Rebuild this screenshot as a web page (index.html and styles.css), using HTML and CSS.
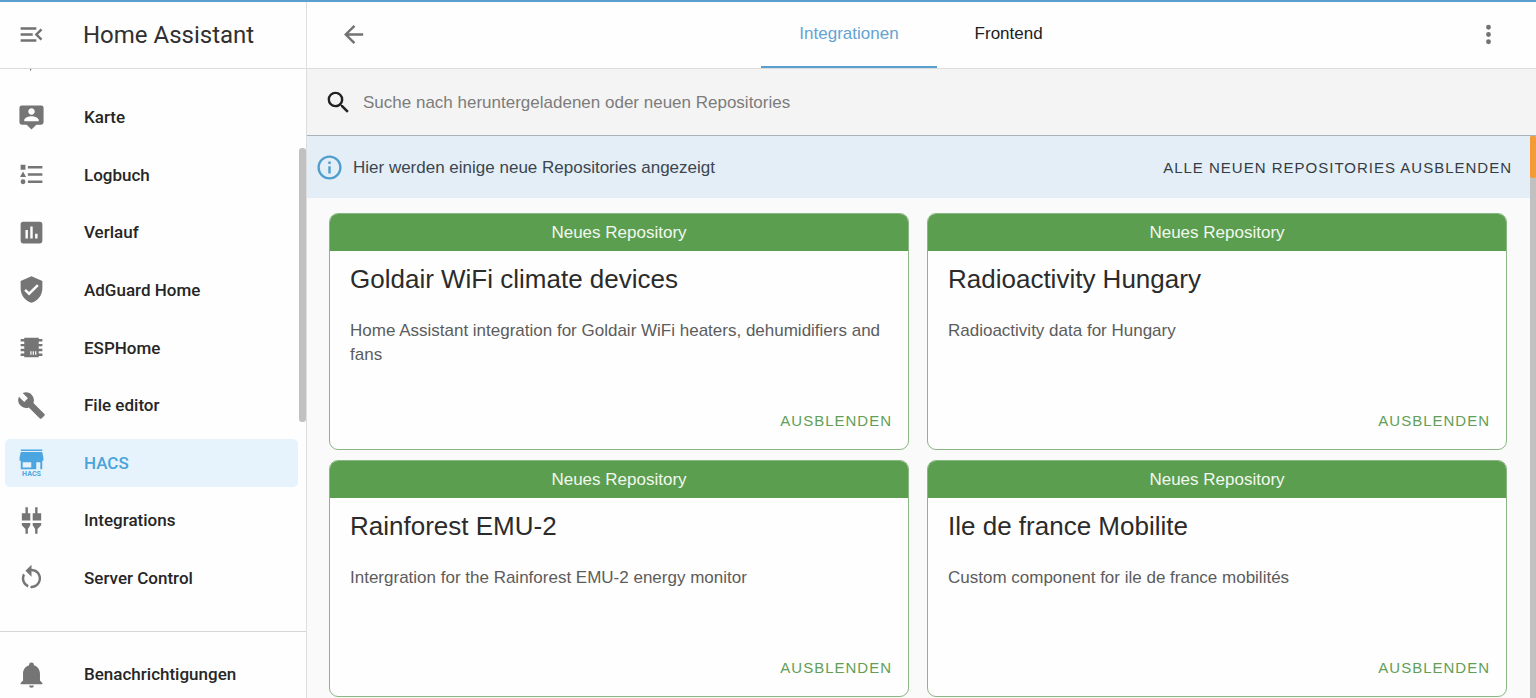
FILE: index.html
```html
<!DOCTYPE html>
<html lang="de">
<head>
<meta charset="utf-8">
<title>Home Assistant</title>
<link rel="stylesheet" href="styles.css">
</head>
<body>
<div class="app">
  <aside class="sidebar">
    <header class="sidebar-header">
      <button class="icon-button" type="button" aria-label="Seitenleiste einklappen">
        <svg class="icon" viewBox="0 0 24 24"><path d="M21,15.61L19.59,17L14.58,12L19.59,7L21,8.39L17.44,12L21,15.61M3,6H16V8H3V6M3,13V11H13V13H3M3,18V16H16V18H3Z"/></svg>
      </button>
      <span class="sidebar-title">Home Assistant</span>
    </header>
    <nav class="nav">
      <svg class="icon nav-clipped" viewBox="0 0 24 24" aria-hidden="true"><path d="M7,2V13H10V22L17,10H13L17,2H7Z"/></svg>
      <a class="nav-item" href="#"><svg class="icon" viewBox="0 0 24 24"><path d="M20,2H4A2,2 0 0,0 2,4V16A2,2 0 0,0 4,18H8L12,22L16,18H20A2,2 0 0,0 22,16V4A2,2 0 0,0 20,2M12,4.3C13.5,4.3 14.7,5.5 14.7,7C14.7,8.5 13.5,9.7 12,9.7C10.5,9.7 9.3,8.5 9.3,7C9.3,5.5 10.5,4.3 12,4.3M18,15H6V14.1C6,12.1 10,11 12,11C14,11 18,12.1 18,14.1V15Z"/></svg><span>Karte</span></a>
      <a class="nav-item" href="#"><svg class="icon" viewBox="0 0 24 24"><path d="M5,9.5L7.5,14H2.5L5,9.5M3,4H7V8H3V4M5,20A2,2 0 0,0 7,18A2,2 0 0,0 5,16A2,2 0 0,0 3,18A2,2 0 0,0 5,20M9,5V7H21V5H9M9,19H21V17H9V19M9,13H21V11H9V13Z"/></svg><span>Logbuch</span></a>
      <a class="nav-item" href="#"><svg class="icon" viewBox="0 0 24 24"><path d="M17,17H15V13H17M13,17H11V7H13M9,17H7V10H9M19,3H5C3.89,3 3,3.89 3,5V19A2,2 0 0,0 5,21H19A2,2 0 0,0 21,19V5C21,3.89 20.1,3 19,3Z"/></svg><span>Verlauf</span></a>
      <a class="nav-item" href="#"><svg class="icon" viewBox="0 0 24 24"><path d="M10,17L6,13L7.41,11.59L10,14.17L16.59,7.58L18,9M12,1L3,5V11C3,16.55 6.84,21.74 12,23C17.16,21.74 21,16.55 21,11V5L12,1Z"/></svg><span>AdGuard Home</span></a>
      <a class="nav-item" href="#"><svg class="icon" viewBox="0 0 24 24"><path fill-rule="evenodd" d="M6,4H18V5H21V7H18V9H21V11H18V13H21V15H18V17H21V19H18V20H6V19H3V17H6V15H3V13H6V11H3V9H6V7H3V5H6V4M11,15V18H12V15H11M13,15V18H14V15H13M15,15V18H16V15H15Z"/></svg><span>ESPHome</span></a>
      <a class="nav-item" href="#"><svg class="icon" viewBox="0 0 24 24"><path d="M22.7,19L13.6,9.9C14.5,7.6 14,4.9 12.1,3C10.1,1 7.1,0.6 4.7,1.7L9,6L6,9L1.6,4.7C0.4,7.1 0.9,10.1 2.9,12.1C4.8,14 7.5,14.5 9.8,13.6L18.9,22.7C19.3,23.1 19.9,23.1 20.3,22.7L22.6,20.4C23.1,20 23.1,19.3 22.7,19Z"/></svg><span>File editor</span></a>
      <a class="nav-item active" href="#" aria-current="page"><svg class="icon hacs-icon" viewBox="0 0 24 26"><path fill-rule="evenodd" d="M3,2H21V3.4H3V2M3,4.2H21L22,9V11.5H2V9L3,4.2M3,11.5H21V18.6H19.4V12.8H16V18.6H3V11.5M4.6,12.8V17.2H11.8V12.8H4.6Z"/><text class="hacs-word" x="12" y="24" text-anchor="middle">HACS</text></svg><span>HACS</span></a>
      <a class="nav-item" href="#"><svg class="icon" viewBox="0 0 24 24"><path d="M7,1H9V6H11V12H4V6H7V1M15,1H17V6H20V12H13V6H15V1M4,14H11V16L9,19V23H7V19L4,16V14M13,14H20V16L17,19V23H15V19L13,16V14Z"/></svg><span>Integrations</span></a>
      <a class="nav-item" href="#"><svg class="icon" viewBox="0 0 24 24"><path d="M12,4C14.1,4 16.1,4.8 17.6,6.3C20.7,9.4 20.7,14.5 17.6,17.6C15.8,19.5 13.3,20.2 10.9,19.9L11.4,17.9C13.1,18.1 14.9,17.5 16.2,16.2C18.5,13.9 18.5,10.1 16.2,7.7C15.1,6.6 13.5,6 12,6V10.6L7,5.6L12,0.6V4M6.3,17.6C3.7,15 3.3,11 5.1,7.9L6.6,9.4C5.5,11.6 5.9,14.4 7.8,16.2C8.3,16.7 8.9,17.1 9.6,17.4L9,19.4C8,19 7.1,18.4 6.3,17.6Z"/></svg><span>Server Control</span></a>
      <div class="nav-thumb"></div>
    </nav>
    <footer class="sidebar-footer">
      <a class="nav-item" href="#"><svg class="icon" viewBox="0 0 24 24"><path d="M21,19V20H3V19L5,17V11C5,7.9 7.03,5.17 10,4.29C10,4.19 10,4.1 10,4A2,2 0 0,1 12,2A2,2 0 0,1 14,4C14,4.1 14,4.19 14,4.29C16.97,5.17 19,7.9 19,11V17L21,19M14,21A2,2 0 0,1 12,23A2,2 0 0,1 10,21"/></svg><span>Benachrichtigungen</span></a>
    </footer>
  </aside>

  <main class="main">
    <header class="toolbar">
      <button class="icon-button" type="button" aria-label="Zurück">
        <svg class="icon" viewBox="0 0 24 24"><path d="M20,11V13H8L13.5,18.5L12.08,19.92L4.16,12L12.08,4.08L13.5,5.5L8,11H20Z"/></svg>
      </button>
      <nav class="tabs">
        <a class="tab selected" href="#">Integrationen</a>
        <a class="tab" href="#">Frontend</a>
      </nav>
      <button class="icon-button menu-button" type="button" aria-label="Menü">
        <svg class="icon" viewBox="0 0 24 24"><path d="M12,16A2,2 0 0,1 14,18A2,2 0 0,1 12,20A2,2 0 0,1 10,18A2,2 0 0,1 12,16M12,10A2,2 0 0,1 14,12A2,2 0 0,1 12,14A2,2 0 0,1 10,12A2,2 0 0,1 12,10M12,4A2,2 0 0,1 14,6A2,2 0 0,1 12,8A2,2 0 0,1 10,6A2,2 0 0,1 12,4Z"/></svg>
      </button>
    </header>

    <label class="search">
      <svg class="icon" viewBox="0 0 24 24" aria-hidden="true"><path d="M9.5,3A6.5,6.5 0 0,1 16,9.5C16,11.11 15.41,12.59 14.44,13.73L14.71,14H15.5L20.5,19L19,20.5L14,15.5V14.71L13.73,14.44C12.59,15.41 11.11,16 9.5,16A6.5,6.5 0 0,1 3,9.5A6.5,6.5 0 0,1 9.5,3M9.5,5C7,5 5,7 5,9.5C5,12 7,14 9.5,14C12,14 14,12 14,9.5C14,7 12,5 9.5,5Z"/></svg>
      <input class="search-input" type="text" aria-label="Suche" placeholder="Suche nach heruntergeladenen oder neuen Repositories">
    </label>

    <div class="content">
      <div class="scroll-area">
        <div class="notice">
          <svg class="icon" viewBox="0 0 24 24" aria-hidden="true"><path d="M11,9H13V7H11M12,20C7.59,20 4,16.41 4,12C4,7.59 7.59,4 12,4C16.41,4 20,7.59 20,12C20,16.41 16.41,20 12,20M12,2A10,10 0 0,0 2,12A10,10 0 0,0 12,22A10,10 0 0,0 22,12A10,10 0 0,0 12,2M11,17H13V11H11V17Z"/></svg>
          <span class="notice-text">Hier werden einige neue Repositories angezeigt</span>
          <button class="text-button" type="button">ALLE NEUEN REPOSITORIES AUSBLENDEN</button>
        </div>
        <div class="cards">
          <article class="card">
            <div class="card-status">Neues Repository</div>
            <h2 class="card-title">Goldair WiFi climate devices</h2>
            <p class="card-text">Home Assistant integration for Goldair WiFi heaters, dehumidifiers and fans</p>
            <button class="text-button card-action" type="button">AUSBLENDEN</button>
          </article>
          <article class="card">
            <div class="card-status">Neues Repository</div>
            <h2 class="card-title">Radioactivity Hungary</h2>
            <p class="card-text">Radioactivity data for Hungary</p>
            <button class="text-button card-action" type="button">AUSBLENDEN</button>
          </article>
          <article class="card">
            <div class="card-status">Neues Repository</div>
            <h2 class="card-title">Rainforest EMU-2</h2>
            <p class="card-text">Intergration for the Rainforest EMU-2 energy monitor</p>
            <button class="text-button card-action" type="button">AUSBLENDEN</button>
          </article>
          <article class="card">
            <div class="card-status">Neues Repository</div>
            <h2 class="card-title">Ile de france Mobilite</h2>
            <p class="card-text">Custom component for ile de france mobilités</p>
            <button class="text-button card-action" type="button">AUSBLENDEN</button>
          </article>
        </div>
      </div>
      <div class="scroll-track"><div class="scroll-thumb"></div></div>
    </div>
  </main>
</div>
</body>
</html>
```
FILE: styles.css
```css
* {
  box-sizing: border-box;
}

body {
  margin: 0;
  font-family: "Liberation Sans", Arial, sans-serif;
  font-size: 17px;
  color: #212121;
  background: #fafafa;
}

button {
  border: 0;
  padding: 0;
  background: none;
  font: inherit;
  cursor: pointer;
}

a {
  color: inherit;
  text-decoration: none;
}

.app {
  display: grid;
  grid-template-columns: 307px 1fr;
  height: 100vh;
  border-top: 2px solid #5a9fcf;
  overflow: hidden;
}

.icon {
  display: block;
  flex: none;
  width: 29px;
  height: 29px;
  fill: currentColor;
}

.icon-button {
  color: #727272;
}

/* Sidebar */
.sidebar {
  display: flex;
  flex-direction: column;
  min-height: 0;
  font-family: Roboto, sans-serif;
  background: #fefefe;
  border-right: 1px solid #dedede;
}

.sidebar-header {
  display: flex;
  align-items: center;
  gap: 37px;
  height: 67px;
  padding: 0 0 1px 17px;
  border-bottom: 1px solid #dcdcdc;
}

.sidebar-title {
  font-size: 24px;
  line-height: 30px;
  color: #303030;
}

.nav {
  position: relative;
  display: flex;
  flex: 1;
  flex-direction: column;
  justify-content: space-between;
  min-height: 0;
  padding: 24px 8px 29px 5px;
  overflow: hidden;
}

.nav-clipped {
  position: absolute;
  top: -24px;
  left: 18px;
  color: #727272;
}

.nav-item {
  display: flex;
  align-items: center;
  gap: 38px;
  height: 48px;
  padding-left: 12px;
  border-radius: 5px;
  font-size: 17px;
  font-weight: 500;
  color: #262626;
}

.nav-item .icon {
  color: #757575;
}

.nav-item.active {
  color: #4aa3da;
  background: #e7f3fc;
}

.nav-item.active .icon {
  color: #4ba5e0;
}

.nav-item .hacs-icon {
  height: 31px;
}

.hacs-word {
  font-size: 6px;
  font-weight: 700;
}

.nav-thumb {
  position: absolute;
  top: 79px;
  right: 0;
  width: 7px;
  height: 274px;
  border-radius: 3px;
  background: #c1c1c1;
}

.sidebar-footer {
  height: 67px;
  padding: 18px 8px 0 5px;
  border-top: 1px solid #d6d6d6;
}

/* Main column */
.main {
  display: flex;
  flex-direction: column;
  min-width: 0;
  min-height: 0;
}

.toolbar {
  display: grid;
  grid-template-columns: 1fr auto 1fr;
  align-items: center;
  height: 67px;
  padding: 0 33px 0 32px;
  background: #fefefe;
  border-bottom: 1px solid #dcdcdc;
}

.toolbar .icon-button {
  justify-self: start;
  padding-bottom: 2px;
}

.toolbar .menu-button {
  justify-self: end;
}

.tabs {
  display: flex;
  height: 66px;
}

.tab {
  display: flex;
  align-items: center;
  padding: 0 38px;
  border-bottom: 2px solid transparent;
}

.tab.selected {
  color: #64a3d4;
  border-color: #5a9fcf;
}

.search {
  display: flex;
  align-items: center;
  gap: 10px;
  height: 67px;
  padding: 0 17px;
  background: #f4f4f4;
  border-bottom: 1px solid #a9b3b9;
}

.search-input {
  flex: 1;
  padding: 2px 0 0;
  border: 0;
  outline: 0;
  background: transparent;
  font: inherit;
  color: #212121;
}

.search-input::placeholder {
  color: #7c7c7c;
  opacity: 1;
}

.content {
  display: flex;
  flex: 1;
  min-height: 0;
}

.scroll-area {
  flex: 1;
  min-width: 0;
  overflow: hidden;
}

.scroll-track {
  width: 6px;
  background: #c1c1c1;
}

.scroll-thumb {
  height: 42px;
  border-radius: 2px;
  background: #f29b38;
}

.notice {
  display: flex;
  align-items: center;
  gap: 9px;
  height: 62px;
  padding: 0 18px 0 8px;
  color: #3c4650;
  background: #e4eef6;
}

.notice .icon {
  color: #4f9fcd;
}

.notice-text {
  flex: 1;
  padding-top: 2px;
}

.text-button {
  font-size: 15px;
  letter-spacing: 1px;
  color: #343c44;
}

.cards {
  display: grid;
  grid-template-columns: 1fr 1fr;
  gap: 10px 18px;
  padding: 15px 23px 10px 22px;
}

.card {
  display: flex;
  flex-direction: column;
  min-height: 237px;
  padding-bottom: 20px;
  border: 1px solid #8bb784;
  border-radius: 9px;
  background: #fefefe;
  overflow: hidden;
}

.card-status {
  margin: -1px -1px 0;
  padding-top: 2px;
  line-height: 36px;
  text-align: center;
  color: #f1f8ee;
  background: #5c9e50;
}

.card-title {
  margin: 12px 20px 0;
  font-size: 26px;
  font-weight: 400;
  line-height: 32px;
  color: #2b2b2b;
}

.card-text {
  flex: 1;
  margin: 24px 20px 0;
  line-height: 24px;
  color: #5c5c5c;
}

.card-action {
  align-self: flex-end;
  margin-right: 16px;
  color: #629f57;
}
```
